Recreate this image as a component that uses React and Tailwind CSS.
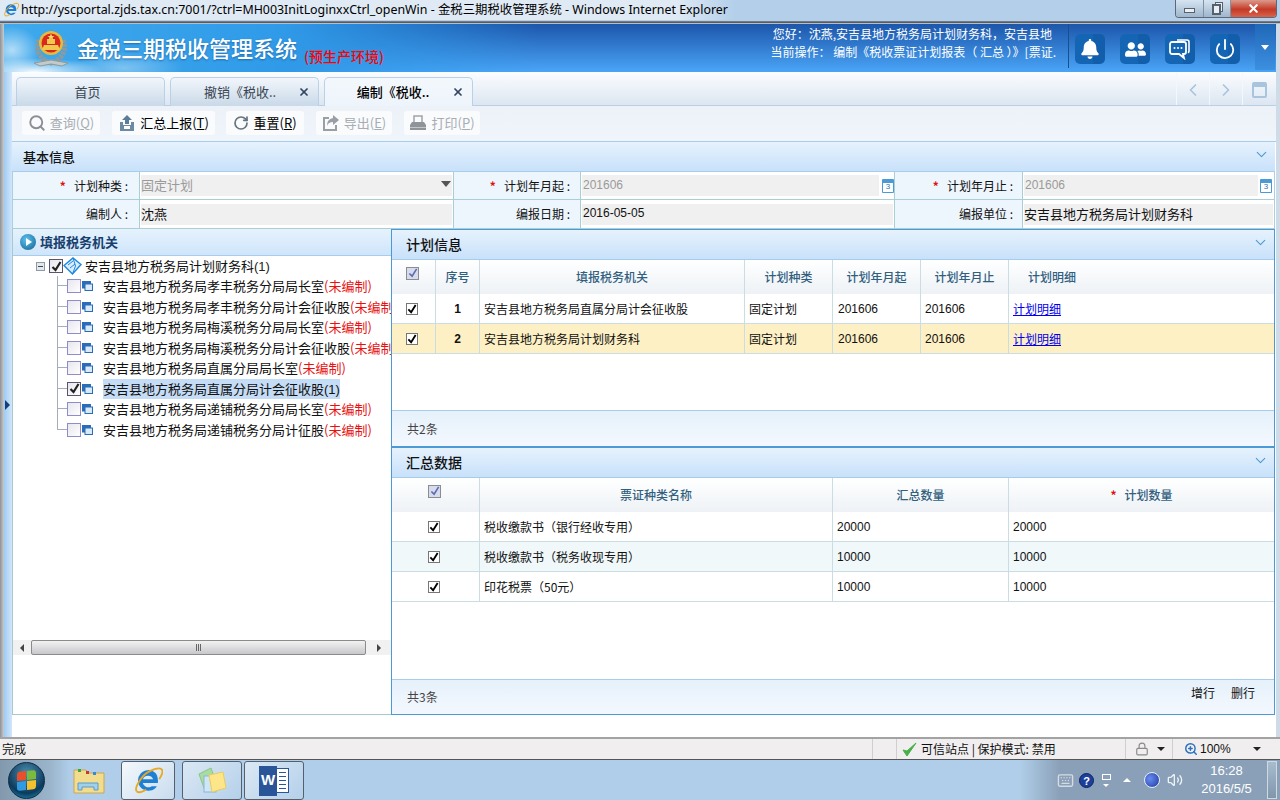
import { Search, RotateCw, ChevronDown, ChevronLeft, ChevronRight, Power, Volume2, X, ZoomIn, Lock, Keyboard } from 'lucide-react'
import { FaBell, FaUserFriends } from 'react-icons/fa'

const cjk = '"Noto Sans CJK SC", sans-serif'
const latin = '"Liberation Sans", sans-serif'

function IeIcon({ size = 16 }) {
  return (
    <svg width={size} height={size} viewBox="0 0 32 32" className="shrink-0">
      <path d="M24 7.5a11 11 0 1 0 1.5 14h-5.5a6 6 0 0 1-9.5-3.5h16c.5-4-.5-8-2.5-10.500zM10.500 14a6 6 0 0 1 11 0z" fill="#1f7fd4" />
      <path d="M4 27C1 24 9 10 17 6c6-3 12-5 14-2 1.500 3-1 7-3 10" fill="none" stroke="#e8a820" strokeWidth="2" />
      <path d="M4 27c2 2 7 0 10-2" fill="none" stroke="#e8a820" strokeWidth="2" />
    </svg>
  )
}

function TitleBar() {
  return (
    <div className="h-[21px] bg-[#b3cfe9] flex items-start shrink-0">
      <div className="h-[20px] w-[735px] flex items-center pl-[3px] bg-[linear-gradient(90deg,#dfeaf5_92%,#b3cfe9)]">
        <IeIcon />
        <span className="ml-[2px] text-[12.400px] leading-[20px] text-black whitespace-nowrap" style={{ fontFamily: '"Noto Sans", "Noto Sans CJK SC", sans-serif' }}>
          http://yscportal.zjds.tax.cn:7001/?ctrl=MH003InitLoginxxCtrl_openWin - 金税三期税收管理系统 - Windows Internet Explorer
        </span>
      </div>
      <div className="ml-auto mr-[3px] flex h-[18px] w-[102px] rounded-b-[4px] border border-t-0 border-[#5a6878] overflow-hidden">
        <div className="w-[28px] bg-[linear-gradient(#d6e4f1,#9fb6cc)] border-r border-[#7e93a8] flex items-center justify-center">
          <div className="w-[11px] h-[5px] mt-[3px] border border-[#56616e] bg-[#e8eef4]" />
        </div>
        <div className="w-[27px] bg-[linear-gradient(#d6e4f1,#9fb6cc)] border-r border-[#7e93a8] flex items-center justify-center">
          <svg width="11" height="13" viewBox="0 0 11 13">
            <rect x="3.500" y="0.500" width="7" height="9" fill="#e8eef4" stroke="#56616e" />
            <rect x="1" y="3" width="7" height="9" fill="#e8eef4" stroke="#56616e" strokeWidth="2" />
          </svg>
        </div>
        <div className="flex-1 bg-[linear-gradient(#dc9a8c,#c43a26_55%,#d8634c)] flex items-center justify-center">
          <X size={13} strokeWidth={4} color="#ffffff" />
        </div>
      </div>
    </div>
  )
}

function Emblem() {
  return (
    <svg width="36" height="38" viewBox="0 0 36 38" className="shrink-0">
      <path d="M6 10C2 20 6 29 18 33 30 29 34 20 30 10" fill="none" stroke="#8f9a9c" strokeWidth="5" strokeDasharray="3 1" />
      <path d="M1 33l17-3 17 3-6 3-11-2-11 2z" fill="#c2cacc" stroke="#8f9a9c" />
      <circle cx="18" cy="13" r="12" fill="#e8b93a" />
      <circle cx="18" cy="13" r="9.500" fill="#d9281e" />
      <path d="M11 15h14l2 5H9z" fill="#f0c84e" />
      <path d="M14 9h8v5h-8z" fill="#f0c84e" />
      <path d="M18 3.500l1 2.500h2.500l-2 1.600.8 2.400-2.300-1.500-2.300 1.500.8-2.400-2-1.600H17z" fill="#f7dc6a" />
    </svg>
  )
}

function HeaderBtn({ children }) {
  return <div className="w-[30px] h-[30px] rounded-[5px] bg-[linear-gradient(90deg,#1565b5_60%,#125eaa_60%)] flex items-center justify-center">{children}</div>
}

function ChatIcon() {
  return (
    <svg width="22" height="22" viewBox="0 0 22 22">
      <path d="M8 2h10a2 2 0 0 1 2 2v9a2 2 0 0 1-1 1.700" fill="none" stroke="#fff" strokeWidth="1.600" />
      <path d="M3 4h12a2 2 0 0 1 2 2v8a2 2 0 0 1-2 2h-1l1 4-5-4H3a2 2 0 0 1-2-2V6a2 2 0 0 1 2-2z" fill="#1565b5" stroke="#fff" strokeWidth="1.800" />
      <circle cx="5.500" cy="10" r="1" fill="#fff" />
      <circle cx="9" cy="10" r="1" fill="#fff" />
      <circle cx="12.500" cy="10" r="1" fill="#fff" />
    </svg>
  )
}

function Header() {
  return (
    <div className="h-[48px] shrink-0 flex items-stretch bg-[radial-gradient(ellipse_70px_14px_at_30px_48px,rgba(255,255,255,0.95),transparent),radial-gradient(ellipse_28px_24px_at_8px_26px,rgba(255,255,255,0.6),transparent),radial-gradient(ellipse_60px_16px_at_120px_44px,rgba(255,255,255,0.35),transparent),linear-gradient(90deg,#3fa9ec_0%,#2f9ae8_22%,rgba(40,130,225,0)_42%),linear-gradient(180deg,#1c56ab,#4aa5f7)]">
      <div className="pl-[29px] pt-[6px] flex items-start" style={{ fontFamily: cjk }}>
        <Emblem />
        <span className="ml-[8px] mt-[2px] text-[22px] leading-[30px] font-medium text-white whitespace-nowrap [text-shadow:0_1px_2px_rgba(20,70,130,0.6)]">金税三期税收管理系统</span>
        <span className="ml-[7px] mt-[16px] text-[14px] leading-[20px] text-[#ff0000] whitespace-nowrap font-medium">(预生产环境)</span>
      </div>
      <div className="ml-auto w-[320px] pr-[12px] text-right text-[12px] leading-[18px] text-white whitespace-nowrap overflow-hidden" style={{ fontFamily: cjk }}>
        <div className="pr-[4px] mt-[1px]">您好：沈燕,安吉县地方税务局计划财务科，安吉县地</div>
        <div>当前操作： 编制《税收票证计划报表（ 汇总 ）》[票证.</div>
      </div>
      <div className="w-[1px] my-0 h-[44px] bg-[#1a4f8e]" />
      <div className="flex items-start gap-[15px] pl-[6px] pt-[10px]">
        <HeaderBtn><FaBell size={20} color="#fff" /></HeaderBtn>
        <HeaderBtn><FaUserFriends size={21} color="#fff" /></HeaderBtn>
        <HeaderBtn><ChatIcon /></HeaderBtn>
        <HeaderBtn><Power size={22} color="#fff" strokeWidth={2} /></HeaderBtn>
      </div>
      <div className="ml-[15px] w-[20px] h-[46px] bg-[linear-gradient(#1f68b8,#3d8fe0)] flex items-center justify-center">
        <div className="w-0 h-0 border-x-[4px] border-x-transparent border-t-[5px] border-t-white" />
      </div>
      <div className="w-[1px]" />
    </div>
  )
}

function Tab({ label, active, closable }) {
  return (
    <div
      className={`w-[149px] h-[29px] -mb-[1px] rounded-t-[5px] border border-b-0 border-[#b9d0e6] flex items-center text-[13px] whitespace-nowrap ${
        active ? 'bg-[linear-gradient(#f3f8fd,#eef4fb)] text-black font-medium' : 'bg-[linear-gradient(#f2f6fb,#c9d9e8)] text-[#3a4652]'
      }`}
    >
      <span className={`flex-1 text-center ${closable ? (active ? 'pl-[9px]' : 'pl-[11px]') : 'pr-[6px]'}`}>{label}</span>
      {closable && <X size={12} strokeWidth={3.500} color="#33475e" className="mr-[8px]" />}
    </div>
  )
}

function TabBar() {
  return (
    <div className="h-[34px] shrink-0 flex items-end pl-[4px] gap-[5px] border-b border-[#b9cfe3] bg-[linear-gradient(#fbfdff,#dce6f1)]" style={{ fontFamily: cjk }}>
      <Tab label="首页" />
      <Tab label="撤销《税收.." closable />
      <Tab label="编制《税收.." active closable />
      <div className="ml-auto flex h-full">
        {[<ChevronLeft key="l" size={20} color="#a9c4de" />, <ChevronRight key="r" size={20} color="#a9c4de" />].map((icon, i) => (
          <div key={i} className="w-[33px] pt-[3px] border-l border-[#f4f8fc] flex items-center justify-center">{icon}</div>
        ))}
        <div className="w-[34px] pt-[3px] border-l border-[#f4f8fc] flex items-center justify-center">
          <div className="w-[15px] h-[16px] rounded-[2px] border-2 border-[#a9c4de] border-t-[5px]" />
        </div>
      </div>
    </div>
  )
}

function UploadIcon() {
  return (
    <svg width="18" height="18" viewBox="0 0 18 18" className="shrink-0">
      <path d="M9 1l5 5h-3v4H7V6H4z" fill="#5c7c98" />
      <path d="M2 8h3v3h8V8h3v9H2z" fill="#6d8aa3" />
      <rect x="6" y="12" width="6" height="3" fill="#ffffff" />
    </svg>
  )
}

function ExportIcon() {
  return (
    <svg width="18" height="18" viewBox="0 0 18 18" className="shrink-0">
      <path d="M7 4H2v12h12v-5" fill="none" stroke="#9a9fa5" strokeWidth="2" />
      <path d="M11 1l6 5-6 5V8C8 8 6 9 5 12c0-5 2-7 6-8z" fill="#9a9fa5" />
    </svg>
  )
}

function PrintIcon() {
  return (
    <svg width="18" height="18" viewBox="0 0 18 18" className="shrink-0">
      <path d="M5 8V2h8v6" fill="none" stroke="#a0a4a9" strokeWidth="1.500" />
      <path d="M3 8h12l2 3v5H1v-5z" fill="#8f9499" />
      <rect x="1" y="13" width="16" height="1" fill="#c4c7ca" />
    </svg>
  )
}

function ToolBtn({ icon, label, hot, width, disabled, ml }) {
  return (
    <div className={`h-[24px] rounded-[3px] bg-[#f9fbfd] flex items-center justify-center gap-[4px] text-[13px] whitespace-nowrap ${width} ${ml} ${disabled ? 'text-[#a8adb3]' : 'text-black'}`}>
      {icon}
      <span>{label}(<span className="underline">{hot}</span>)</span>
    </div>
  )
}

function ToolBar() {
  return (
    <div className="h-[36px] shrink-0 flex items-center pl-[10px] pb-[2px] bg-[linear-gradient(#edf2f9,#f0f5fb)] border-b border-[#a8cdea]" style={{ fontFamily: cjk }}>
      <ToolBtn disabled width="w-[78px]" ml="ml-[0px]" label="查询" hot="Q" icon={<Search size={18} color="#8a8f96" strokeWidth={2.500} />} />
      <ToolBtn width="w-[103px]" ml="ml-[12px]" label="汇总上报" hot="T" icon={<UploadIcon />} />
      <ToolBtn width="w-[78px]" ml="ml-[11px]" label="重置" hot="R" icon={<RotateCw size={16} color="#66727e" strokeWidth={2.500} />} />
      <ToolBtn disabled width="w-[76px]" ml="ml-[12px]" label="导出" hot="E" icon={<ExportIcon />} />
      <ToolBtn disabled width="w-[76px]" ml="ml-[12px]" label="打印" hot="P" icon={<PrintIcon />} />
    </div>
  )
}

function PanelHead({ title, h = 'h-[30px]', size = 'text-[14px]', pl = 'pl-[14px]' }) {
  return (
    <div className={`${h} ${pl} shrink-0 flex items-center justify-between pr-[5px] border-b border-[#a8cdea] bg-[linear-gradient(#e6f2fd,#c8e1fa)]`}>
      <span className={`${size} font-medium text-[#111]`} style={{ fontFamily: cjk }}>{title}</span>
      <ChevronDown size={17} color="#4a9ad6" strokeWidth={1.500} className="-mt-[4px]" />
    </div>
  )
}

function CalIcon() {
  return (
    <div className="w-[12px] h-[14px] rounded-[1px] border border-[#4a9ad6] border-t-[4px] bg-white flex items-center justify-center text-[8px] leading-none text-[#2b75b5] shrink-0" style={{ fontFamily: latin }}>3</div>
  )
}

function Label({ children, required, pr }) {
  return (
    <div className={`${pr} bg-[#eef6fd] flex items-center justify-end text-[12px] text-[#111] whitespace-nowrap`}>
      {required && <span className="text-[#e01010] mr-[8px] font-bold">*</span>}
      {children}&nbsp;:
    </div>
  )
}

function FormSection() {
  const value = 'mx-[1px] h-[21px] bg-[#f0f0f0] flex items-center leading-none pb-[2px]'
  return (
    <div className="shrink-0 mr-[1px] border-x border-[#a8cfe4]" style={{ fontFamily: cjk }}>
      <div className="h-[28px] grid grid-cols-[126px_315px_126px_315px_127px_1fr] border-b border-[#a9cfd4]">
        <Label required pr="pr-[11px]">计划种类</Label>
        <div className="border-x border-[#a9cfd4] flex items-center bg-white">
          <div className={`${value} flex-1 text-[13px] text-[#9a9a9a] justify-between pr-[1px]`}>
            固定计划
            <div className="mb-[2px] w-0 h-0 border-x-[5px] border-x-transparent border-t-[6px] border-t-[#555]" />
          </div>
        </div>
        <Label required pr="pr-[10px]">计划年月起</Label>
        <div className="border-x border-[#a9cfd4] flex items-center bg-white">
          <div className={`${value} pl-[1px] w-[297px] text-[12px] text-[#9a9a9a]`} style={{ fontFamily: latin }}>201606</div>
          <span className="ml-[2px]"><CalIcon /></span>
        </div>
        <Label required pr="pr-[9px]">计划年月止</Label>
        <div className="border-l border-[#a9cfd4] flex items-center bg-white">
          <div className={`${value} pl-[1px] w-[234px] text-[12px] text-[#9a9a9a]`} style={{ fontFamily: latin }}>201606</div>
          <span className="ml-[1px]"><CalIcon /></span>
        </div>
      </div>
      <div className="h-[29px] grid grid-cols-[126px_315px_126px_315px_127px_1fr] border-b border-[#a9cfd4]">
        <Label pr="pr-[11px]">编制人</Label>
        <div className="border-x border-[#a9cfd4] flex items-center bg-white">
          <div className={`${value} flex-1 text-[13px] text-[#111]`}>沈燕</div>
        </div>
        <Label pr="pr-[10px]">编报日期</Label>
        <div className="border-x border-[#a9cfd4] flex items-center bg-white">
          <div className={`${value} pl-[1px] flex-1 text-[12px] text-[#111]`} style={{ fontFamily: latin }}>2016-05-05</div>
        </div>
        <Label pr="pr-[9px]">编报单位</Label>
        <div className="border-l border-[#a9cfd4] flex items-center bg-white">
          <div className={`${value} flex-1 text-[13px] text-[#111]`}>安吉县地方税务局计划财务科</div>
        </div>
      </div>
    </div>
  )
}

function TreeBox({ checked, dim }) {
  return (
    <span className={`w-[14px] h-[14px] shrink-0 border bg-[linear-gradient(135deg,#e6e6ee,#ffffff)] flex items-center justify-center ${dim ? 'border-[#57566e]' : 'border-[#8f8ccc]'}`}>
      {checked && (
        <svg width="11" height="11" viewBox="0 0 11 11"><path d="M1.500 6l3 3 5-8" fill="none" stroke="#222" strokeWidth="2.200" /></svg>
      )}
    </span>
  )
}

function OrgIcon() {
  return (
    <svg width="11" height="10" viewBox="0 0 11 10" className="shrink-0 ml-[1px]">
      <rect x="0.500" y="0.500" width="8" height="6.500" fill="#2b6cb8" stroke="#2b6cb8" />
      <rect x="3" y="3" width="7.500" height="6.500" fill="#d8e9f8" stroke="#2b6cb8" />
    </svg>
  )
}

function BookIcon() {
  return (
    <svg width="19" height="18" viewBox="0 0 19 18" className="shrink-0">
      <path d="M1 8.500L10 1l8 6.500L9.500 17z" fill="#d9edfd" stroke="#1f86e0" strokeWidth="1.400" />
      <path d="M10 1l2.500 8L9.500 17M5 8l5-4M7 11l5-4" fill="none" stroke="#1f86e0" />
    </svg>
  )
}

const TREE = [
  ['安吉县地方税务局孝丰税务分局局长室', '(未编制)'],
  ['安吉县地方税务局孝丰税务分局计会征收股', '(未编制)'],
  ['安吉县地方税务局梅溪税务分局局长室', '(未编制)'],
  ['安吉县地方税务局梅溪税务分局计会征收股', '(未编制)'],
  ['安吉县地方税务局直属分局局长室', '(未编制)'],
  ['安吉县地方税务局直属分局计会征收股', '(1)', true],
  ['安吉县地方税务局递铺税务分局局长室', '(未编制)'],
  ['安吉县地方税务局递铺税务分局计征股', '(未编制)'],
]

function TreePanel() {
  return (
    <div className="w-[379px] shrink-0 h-full border border-t-0 border-r-0 border-[#a8c9cc] flex flex-col overflow-hidden" style={{ fontFamily: cjk }}>
      <div className="h-[27px] shrink-0 flex items-center pl-[7px] border-b border-[#a8cdea] bg-[linear-gradient(#e6f2fd,#cfe5fb)]">
        <span className="w-[16px] h-[16px] rounded-full bg-[radial-gradient(circle_at_40%_35%,#5cc2ee,#10608f)] flex items-center justify-center">
          <span className="w-0 h-0 ml-[2px] border-y-[4px] border-y-transparent border-l-[6px] border-l-white" />
        </span>
        <span className="ml-[4px] text-[13px] font-bold text-[#17406e]">填报税务机关</span>
      </div>
      <div className="h-[384px] shrink-0 overflow-hidden text-[13px] whitespace-nowrap">
        <div className="h-[20px] flex items-center pl-[23px]">
          <span className="w-[9px] h-[9px] border border-[#8c9aa8] bg-[#e4e8ec] flex items-center justify-center shrink-0">
            <span className="w-[5px] h-[1px] bg-[#445]" />
          </span>
          <span className="ml-[4px]"><TreeBox checked dim /></span>
          <BookIcon />
          <span className="ml-[3px] text-[#111]">安吉县地方税务局计划财务科<span className="text-[#222]" style={{ fontFamily: latin }}>(1)</span></span>
        </div>
        {TREE.map(([name, state, on], i) => (
          <div key={name} className="h-[20.500px] flex items-center pl-[44px]">
            <span className="w-[10px] h-full flex flex-col shrink-0">
              <span className="h-1/2 border-l border-b border-[#a4acc0]" />
              <span className={`h-1/2 ${i < TREE.length - 1 ? 'border-l border-[#a4acc0]' : ''}`} />
            </span>
            <TreeBox checked={on} dim={on} />
            <OrgIcon />
            <span className={`ml-[10px] h-[20px] leading-[20px] text-[#111] ${on ? 'bg-[#c4dcf6]' : ''}`}>
              {name}
              <span className={on ? 'text-[#111]' : 'text-[#e81010]'} style={on ? { fontFamily: latin } : undefined}>{state}</span>
            </span>
          </div>
        ))}
      </div>
      <div className="h-[15px] shrink-0 flex items-center bg-[#f1f1f1]">
        <span className="w-[18px] flex justify-center"><span className="w-0 h-0 border-y-[4px] border-y-transparent border-r-[4px] border-r-[#444]" /></span>
        <div className="w-[335px] h-[15px] rounded-[2px] border border-[#8b8b8b] bg-[linear-gradient(#f2f2f2,#c8c8cc)] flex items-center justify-center gap-[1px]">
          <span className="w-[1px] h-[7px] bg-[#666]" />
          <span className="w-[1px] h-[7px] bg-[#666]" />
          <span className="w-[1px] h-[7px] bg-[#666]" />
        </div>
        <span className="flex-1 flex justify-center"><span className="w-0 h-0 border-y-[4px] border-y-transparent border-l-[4px] border-l-[#444]" /></span>
      </div>
    </div>
  )
}

function Check({ head }) {
  if (head) {
    return (
      <span className="w-[13px] h-[13px] border border-[#8c8c8c] bg-[#d6dcee] flex items-center justify-center">
        <svg width="10" height="10" viewBox="0 0 11 11"><path d="M1.500 6l3 3 5-8" fill="none" stroke="#5d6cb0" strokeWidth="1.800" /></svg>
      </span>
    )
  }
  return (
    <span className="w-[12px] h-[12px] border border-[#777] bg-white flex items-center justify-center">
      <svg width="10" height="10" viewBox="0 0 11 11"><path d="M1.500 6l3 3 5-8" fill="none" stroke="#000" strokeWidth="2" /></svg>
    </span>
  )
}

const PLAN_COLS = 'grid grid-cols-[44px_44px_265px_88px_88px_88px_1fr]'
const SUM_COLS = 'grid grid-cols-[88px_353px_176px_1fr]'
const HEAD_ROW = 'h-[34px] bg-[linear-gradient(#ffffff,#eef2f6)] text-[12px] font-medium text-[#31607f]'
const CELL = 'border-r border-[#c9dde2] flex items-center h-full'

function PlanTable() {
  const rows = [['1', '安吉县地方税务局直属分局计会征收股', false], ['2', '安吉县地方税务局计划财务科', true]]
  return (
    <div className="shrink-0">
      <div className={`${PLAN_COLS} ${HEAD_ROW}`}>
        <div className={`${CELL} pl-[14px] pb-[8px]`}><Check head /></div>
        <div className={`${CELL} justify-center`}>序号</div>
        <div className={`${CELL} justify-center`}>填报税务机关</div>
        <div className={`${CELL} justify-center`}>计划种类</div>
        <div className={`${CELL} justify-center`}>计划年月起</div>
        <div className={`${CELL} justify-center`}>计划年月止</div>
        <div className="flex items-center h-full pl-[19px]">计划明细</div>
      </div>
      {rows.map(([no, org, on]) => (
        <div key={no} className={`${PLAN_COLS} h-[30px] border-b border-[#c9dde2] text-[12px] text-[#111] ${on ? 'bg-[#fdf0c4]' : 'bg-white'}`}>
          <div className={`${CELL} pl-[14px]`}><Check /></div>
          <div className={`${CELL} justify-center font-bold`} style={{ fontFamily: latin }}>{no}</div>
          <div className={`${CELL} pl-[4px]`}>{org}</div>
          <div className={`${CELL} pl-[4px]`}>固定计划</div>
          <div className={`${CELL} pl-[5px]`} style={{ fontFamily: latin }}>201606</div>
          <div className={`${CELL} pl-[4px]`} style={{ fontFamily: latin }}>201606</div>
          <div className="flex items-center pl-[4px]"><a className="text-[#0000ee] underline" href="#plan">计划明细</a></div>
        </div>
      ))}
    </div>
  )
}

function SumTable() {
  const rows = [
    ['税收缴款书（银行经收专用）', '20000', '20000', false],
    ['税收缴款书（税务收现专用）', '10000', '10000', true],
    ['印花税票（50元）', '10000', '10000', false],
  ]
  return (
    <div className="shrink-0">
      <div className={`${SUM_COLS} ${HEAD_ROW}`}>
        <div className={`${CELL} pl-[36px] pb-[8px]`}><Check head /></div>
        <div className={`${CELL} justify-center`}>票证种类名称</div>
        <div className={`${CELL} justify-center`}>汇总数量</div>
        <div className="flex items-center justify-center h-full"><span className="text-[#e01010] mr-[8px] font-bold">*</span>计划数量</div>
      </div>
      {rows.map(([name, a, b, alt]) => (
        <div key={name} className={`${SUM_COLS} h-[30px] border-b border-[#c9dde2] text-[12px] text-[#111] ${alt ? 'bg-[#f0f8fa]' : 'bg-white'}`}>
          <div className={`${CELL} pl-[36px]`}><Check /></div>
          <div className={`${CELL} pl-[4px]`}>{name}</div>
          <div className={`${CELL} pl-[4px]`} style={{ fontFamily: latin }}>{a}</div>
          <div className="flex items-center pl-[4px]" style={{ fontFamily: latin }}>{b}</div>
        </div>
      ))}
    </div>
  )
}

function Footer({ count, h, children }) {
  return (
    <div className={`${h} shrink-0 flex items-center justify-between pl-[15px] border-t border-[#a8cdea] bg-[linear-gradient(#e6f1fb,#f3f8fe)] text-[12px] text-[#444]`}>
      <span>{count}</span>
      {children}
    </div>
  )
}

function DataPanel() {
  return (
    <div className="flex-1 min-w-0 mr-[1px] h-full border border-[#4a9ad6] flex flex-col bg-white overflow-hidden" style={{ fontFamily: cjk }}>
      <div className="h-[218px] shrink-0 flex flex-col">
        <PanelHead title="计划信息" />
        <PlanTable />
        <div className="flex-1" />
        <Footer count="共2条" h="h-[36px]" />
        <div className="h-[2px] shrink-0 bg-[#4a9ad6]" />
      </div>
      <div className="flex-1 min-h-0 flex flex-col">
        <PanelHead title="汇总数据" />
        <SumTable />
        <div className="flex-1" />
        <Footer count="共3条" h="h-[35px]">
          <div className="flex gap-[16px] pr-[19px] pb-[8px] text-[#111]"><span>增行</span><span>删行</span></div>
        </Footer>
      </div>
    </div>
  )
}

function StatusBar() {
  return (
    <div className="h-[23px] shrink-0 border-t-2 border-[#a3a3a3] border-b border-b-[#555] bg-[#f0eeee] flex items-center text-[12px] text-[#111] whitespace-nowrap" style={{ fontFamily: cjk }}>
      <span className="pl-[2px] w-[872px]">完成</span>
      <span className="w-[24px] h-full border-l border-[#d0cece]" />
      <span className="w-[229px] h-full border-l border-[#d0cece] flex items-center pl-[5px]">
        <svg width="15" height="15" viewBox="0 0 15 15"><path d="M1 8l4 6L14 1 5 9z" fill="#48b048" stroke="#48b048" strokeLinejoin="round" /></svg>
        <span className="ml-[4px]">可信站点 | 保护模式: 禁用</span>
      </span>
      <span className="w-[47px] h-full border-l border-[#d0cece] flex items-center pl-[9px] gap-[8px]">
        <Lock size={14} color="#8a8a8a" />
        <span className="w-0 h-0 border-x-[4px] border-x-transparent border-t-[4px] border-t-[#222]" />
      </span>
      <span className="flex-1 h-full border-l border-[#d0cece] flex items-center pl-[11px]">
        <ZoomIn size={14} color="#2c70c0" strokeWidth={2.500} />
        <span className="ml-[2px] w-[53px]" style={{ fontFamily: latin }}>100%</span>
        <span className="w-0 h-0 border-x-[4px] border-x-transparent border-t-[4px] border-t-[#222]" />
      </span>
    </div>
  )
}

function TaskBtn({ children, w, ml, active }) {
  return (
    <div className={`${w} ${ml} h-[39px] mt-[1px] rounded-[3px] border border-[#55606c] flex items-center justify-center ${active ? 'bg-[linear-gradient(135deg,#f4f8fc,#c8dcee)]' : 'bg-[linear-gradient(135deg,#dbe8f4,#b4d0ea)]'}`}>
      {children}
    </div>
  )
}

function TaskBar() {
  return (
    <div className="h-[40px] shrink-0 flex items-start bg-[linear-gradient(90deg,#8299ad_0,#9ab4cb_50px,#b0cee9_70px,#b0cee9_1020px,#8aa0b8_1060px)]">
      <div className="w-[60px] h-full flex items-center pl-[8px]">
        <div className="w-[37px] h-[37px] rounded-full bg-[radial-gradient(circle_at_50%_30%,#4d8fb0,#0d3a5c_65%,#19a3c7)] border border-[#0e2c44] flex items-center justify-center">
          <div className="grid grid-cols-2 gap-[1px] -skew-y-6">
            <span className="w-[9px] h-[9px] bg-[#e8502c] rounded-tl-[3px]" />
            <span className="w-[9px] h-[9px] bg-[#7cba3c] rounded-tr-[3px]" />
            <span className="w-[9px] h-[9px] bg-[#2f9ae0] rounded-bl-[3px]" />
            <span className="w-[9px] h-[9px] bg-[#f4c02e] rounded-br-[3px]" />
          </div>
        </div>
      </div>
      <div className="ml-[13px] mt-[6px] w-[32px]">
        <svg width="32" height="28" viewBox="0 0 32 28">
          <path d="M1 4h12l2 3h16v20H1z" fill="#f2dc8e" stroke="#c9a850" />
          <rect x="5" y="3" width="3" height="3" fill="#3aa83a" />
          <rect x="13" y="5" width="3" height="3" fill="#c83a2a" />
          <rect x="20" y="6" width="3" height="3" fill="#2f8ae0" />
          <path d="M5 24V17h20v7h-4v-3H9v3z" fill="#9fd0ee" stroke="#5f9cc8" />
        </svg>
      </div>
      <TaskBtn w="w-[54px]" ml="ml-[16px]" active><IeIcon size={30} /></TaskBtn>
      <TaskBtn w="w-[60px]" ml="ml-[7px]">
        <svg width="32" height="30" viewBox="0 0 32 30">
          <path d="M3 8l12-6 5 14-12 6z" fill="#a9dca0" stroke="#8cc488" />
          <rect x="8" y="10" width="12" height="16" fill="#cfe6f6" stroke="#8ab6d8" />
          <path d="M13 9l14-3 3 16-14 4z" fill="#fde68a" stroke="#e8cc60" />
        </svg>
      </TaskBtn>
      <TaskBtn w="w-[60px]" ml="ml-[2px]">
        <div className="flex items-center">
          <div className="w-[18px] h-[30px] bg-[#2a5699] flex items-center justify-center text-white font-bold text-[15px]" style={{ fontFamily: latin }}>W</div>
          <div className="w-[12px] h-[25px] bg-white border border-[#2a5699] border-l-0 flex flex-col justify-around px-[2px] py-[2px]">
            {[0, 1, 2, 3, 4].map((i) => <span key={i} className="h-[1px] bg-[#2a5699]" />)}
          </div>
        </div>
      </TaskBtn>
      <div className="ml-auto h-full flex items-center">
        <Keyboard size={17} color="#d4dbe2" />
        <span className="ml-[5px] w-[15px] h-[15px] rounded-full bg-[#1c3f9c] border border-[#0f2460] text-white text-[11px] leading-[14px] font-bold text-center" style={{ fontFamily: latin }}>?</span>
        <span className="ml-[5px] w-[14px] flex flex-col items-center gap-[4px]">
          <span className="w-[9px] h-[6px] border border-white" />
          <span className="w-0 h-0 border-x-[3px] border-x-transparent border-t-[3px] border-t-white" />
        </span>
        <span className="ml-[10px] w-0 h-0 border-x-[4px] border-x-transparent border-b-[4px] border-b-white" />
        <span className="ml-[13px] w-[16px] h-[16px] rounded-full bg-[radial-gradient(circle_at_35%_40%,#6a8cf0,#1a3aa0)] border border-[#e8eef8]" />
        <Volume2 size={16} color="#eef2f6" className="ml-[7px]" />
        <div className="w-[84px] pl-[3px] text-center text-[13px] leading-[18px] text-white" style={{ fontFamily: latin }}>
          <div>16:28</div>
          <div>2016/5/5</div>
        </div>
        <div className="w-[10px] h-[38px] mr-[3px] border border-[#d0d8e0] bg-[linear-gradient(#a8bccf,#8096ab)]" />
      </div>
    </div>
  )
}

export default function App() {
  return (
    <div className="w-[1280px] h-[800px] overflow-hidden flex flex-col bg-white" style={{ fontFamily: cjk }}>
      <TitleBar />
      <div className="h-[3px] shrink-0 bg-[linear-gradient(#7d8a96,#555e68_50%,#e8eef4)]" />
      <div className="flex-1 min-h-0 flex">
        <div className="w-[4px] shrink-0 bg-[linear-gradient(90deg,#8d9297,#c8ccd0)]" />
        <div className="flex-1 min-w-0 flex flex-col">
          <Header />
          <div className="flex-1 min-h-0 flex">
            <div className="w-[8px] shrink-0 bg-[linear-gradient(90deg,#9fcbf2,#d3e7fa)] flex items-center">
              <span className="ml-[1px] w-0 h-0 border-y-[5px] border-y-transparent border-l-[5px] border-l-[#123f7c]" />
            </div>
            <div className="flex-1 min-w-0 flex flex-col bg-white">
              <TabBar />
              <ToolBar />
              <div className="mr-[1px]"><PanelHead title="基本信息" h="h-[30px]" size="text-[13px]" pl="pl-[11px]" /></div>
              <FormSection />
              <div className="h-[486px] shrink-0 flex">
                <TreePanel />
                <DataPanel />
              </div>
            </div>
          </div>
        </div>
        <div className="w-[4px] shrink-0 bg-[#cfdce8]" />
      </div>
      <StatusBar />
      <TaskBar />
    </div>
  )
}
